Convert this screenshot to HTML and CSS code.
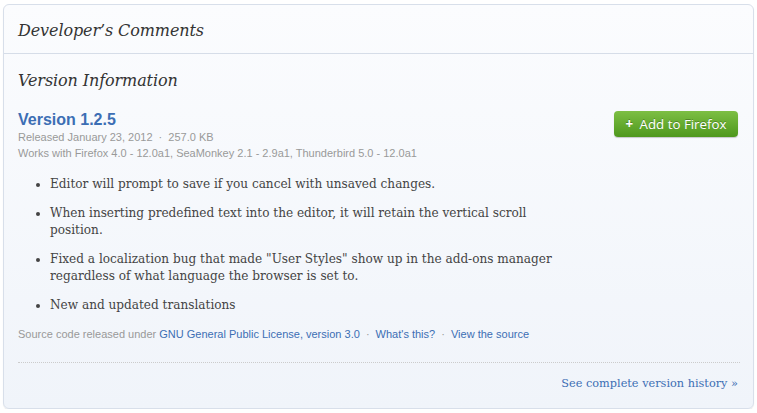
FILE: index.html
```
<!DOCTYPE html>
<html>
<head>
<meta charset="utf-8">
<link rel="stylesheet" href="styles.css">
</head>
<body>
<div class="panel">
  <div class="head">
    <h2 class="title">Developer’s Comments</h2>
  </div>
  <div class="body">
    <h2 class="title sub">Version Information</h2>
    <div class="version">
      <div class="vinfo">
        <a class="vname">Version 1.2.5</a>
        <div class="meta">Released January 23, 2012 <span class="dot">·</span> 257.0 KB</div>
        <div class="meta">Works with Firefox 4.0 - 12.0a1, SeaMonkey 2.1 - 2.9a1, Thunderbird 5.0 - 12.0a1</div>
      </div>
      <a class="btn"><span class="plus">+</span> Add to Firefox</a>
    </div>
    <ul class="notes">
      <li>Editor will prompt to save if you cancel with unsaved changes.</li>
      <li>When inserting predefined text into the editor, it will retain the vertical scroll position.</li>
      <li>Fixed a localization bug that made "User Styles" show up in the add-ons manager regardless of what language the browser is set to.</li>
      <li>New and updated translations</li>
    </ul>
    <div class="source">Source code released under <a>GNU General Public License, version 3.0</a> <span class="dot">·</span> <a>What's this?</a> <span class="dot">·</span> <a>View the source</a></div>
    <div class="more"><a>See complete version history »</a></div>
  </div>
</div>
</body>
</html>
```
FILE: styles.css
```
html, body { margin: 0; padding: 0; background: #fff; }
body { padding: 4px 3px 0 3px; }
.panel {
  width: 751px;
  height: 405px;
  box-sizing: border-box;
  border: 1px solid #d8dfea;
  border-radius: 6px;
  background: linear-gradient(#fbfcfe, #f0f4fa);
  box-shadow: 0 1px 1px rgba(0,0,0,0.08);
}
.head {
  height: 48px;
  border-bottom: 1px solid #d6dde8;
  padding: 0 14px;
}
.title {
  margin: 0;
  font-family: "DejaVu Serif", Georgia, serif;
  font-style: italic;
  font-weight: normal;
  font-size: 16px;
  line-height: 20px;
  color: #333;
  padding-top: 16px;
  letter-spacing: -0.1px;
}
.body { padding: 0 15px 0 14px; }
.sub { padding-top: 17px; }
.version {
  display: flex;
  justify-content: space-between;
  align-items: flex-start;
  margin-top: 20px;
}
.vname {
  display: block;
  font-family: "Liberation Sans", Arial, sans-serif;
  font-weight: bold;
  font-size: 16px;
  color: #3c6eb4;
  line-height: 18px;
}
.meta {
  font-family: "Liberation Sans", Arial, sans-serif;
  font-size: 11px;
  color: #999;
  line-height: 16px;
}
.dot { padding: 0 3px; }
.btn {
  display: block;
  width: 124px;
  height: 26px;
  box-sizing: border-box;
  border-radius: 4px;
  background: linear-gradient(#7dbf44, #4e981d);
  box-shadow: 0 1px 1px rgba(0,0,0,0.2);
  color: #fff;
  font-family: "Open Sans", "DejaVu Sans", sans-serif;
  font-size: 13.3px;
  line-height: 26px;
  text-align: center;
  text-shadow: 0 -1px 0 rgba(0,0,0,0.25);
}
.plus { font-weight: bold; margin-right: 3px; }
.notes {
  margin: 15px 0 0 0;
  padding: 0 0 0 32px;
  width: 512px;
  list-style: disc;
  font-family: "DejaVu Serif", Georgia, serif;
  font-size: 12.1px;
  line-height: 17px;
  color: #444;
}
.notes li { margin-bottom: 12px; }
.source {
  font-family: "Liberation Sans", Arial, sans-serif;
  font-size: 11px;
  color: #999;
  margin-top: 14px;
  padding-bottom: 22px;
  border-bottom: 1px dotted #ccc;
  width: 722px;
}
.source a { color: #3c6eb4; }
.more {
  text-align: right;
  padding-top: 14px;
  font-family: "DejaVu Serif", Georgia, serif;
  font-size: 11.3px;
  width: 720px;
}
.more a { color: #3c6eb4; }
```
